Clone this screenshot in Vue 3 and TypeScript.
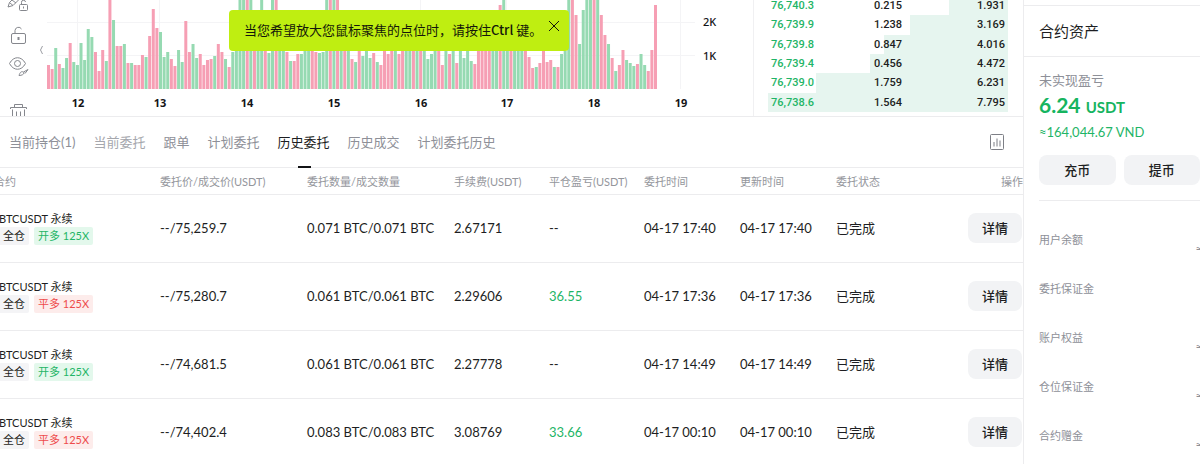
<script setup lang="ts">
import { ref } from 'vue'

interface Bar {
  x: number
  h: number
  up: boolean
}

interface Order {
  side: string
  kind: 'open' | 'close'
  price: string
  amount: string
  fee: string
  pnl: string
  time: string
}

// Hourly volume, height in pixels followed by r (down) or g (up)
const volume = `
24r 20r 41g 25r 21g 31g 46r 27g 24g 46g 29g 60g 52g 37r 18r 39r 28g 95r 69g 43r 43r 45g 26r 26g
24r 24r 34r 32g 53r 80r 61r 57g 32g 37g 30r 23r 39g 27g 68r 37r 45g 31g 35r 24r 29r 30r 33g 45r
37r 30g 22r 37g 46g 95g 95g 95r 95g 45r 50g 95g 52r 36g 95g 95r 55g 46g 37r 28g 28r 35r 35g 42g
50g 44r 37r 36g 37g 95g 95r 95g 95r 48g 46r 44g 30r 27g 42r 33g 42g 31g 36r 27g 24r 44r 35r 48r
46g 35r 50r 52g 60g 55r 48g 46r 42g 30g 35g 42g 46r 24r 44g 35r 42g 26r 46g 31g 40g 28g 25r 48r
50r 52r 44r 60g 64g 84r 95g 60g 55r 62g 50g 44g 40r 32r 21r 22g 26r 39r 27r 29r 22g 22r 35g 38g
95g 95r 74r 45g 79g 95g 95g 95r 95g 74r 54r 45g 31r 18g 24r 39r 29g 26g 23g 25r 35g 24g 18r 39r
84r`

const pitch = 607 / 168
const bars: Bar[] = volume
  .trim()
  .split(/\s+/)
  .map((v, i) => ({ x: 7 + i * pitch, h: parseInt(v, 10), up: v.endsWith('g') }))

const days = [
  { label: '12', x: 38 },
  { label: '13', x: 120 },
  { label: '14', x: 207 },
  { label: '15', x: 294 },
  { label: '16', x: 381 },
  { label: '17', x: 467 },
  { label: '18', x: 554 },
  { label: '19', x: 641 },
]

const bids = [
  { price: '76,740.3', amount: '0.215', total: '1.931' },
  { price: '76,739.9', amount: '1.238', total: '3.169' },
  { price: '76,739.8', amount: '0.847', total: '4.016' },
  { price: '76,739.4', amount: '0.456', total: '4.472' },
  { price: '76,739.0', amount: '1.759', total: '6.231' },
  { price: '76,738.6', amount: '1.564', total: '7.795' },
]
const depth = (total: string) => `${(Number(total) / 7.795) * 100}%`

const tabs = ['当前持仓(1)', '当前委托', '跟单', '计划委托', '历史委托', '历史成交', '计划委托历史']
const active = ref('历史委托')
const toastOpen = ref(true)

const orders: Order[] = [
  { side: '开多 125X', kind: 'open', price: '--/75,259.7', amount: '0.071 BTC/0.071 BTC', fee: '2.67171', pnl: '--', time: '04-17 17:40' },
  { side: '平多 125X', kind: 'close', price: '--/75,280.7', amount: '0.061 BTC/0.061 BTC', fee: '2.29606', pnl: '36.55', time: '04-17 17:36' },
  { side: '开多 125X', kind: 'open', price: '--/74,681.5', amount: '0.061 BTC/0.061 BTC', fee: '2.27778', pnl: '--', time: '04-17 14:49' },
  { side: '平多 125X', kind: 'close', price: '--/74,402.4', amount: '0.083 BTC/0.083 BTC', fee: '3.08769', pnl: '33.66', time: '04-17 00:10' },
]

const balances = [
  { label: '用户余额', approx: true },
  { label: '委托保证金', approx: false },
  { label: '账户权益', approx: true },
  { label: '仓位保证金', approx: true },
  { label: '合约赠金', approx: true },
]
</script>

<template>
  <div class="page">
    <main class="main">
      <div class="top">
        <section class="chart">
          <div class="tools">
            <button class="tool" type="button" aria-label="画图锁定">
              <svg width="22" height="22" viewBox="0 0 22 22">
                <path d="M1 13 2.500 8.500 10 1l3.500 3L6 11.500z M2.500 8.500l3.500 3M5 6l4 3" />
                <rect x="12.500" y="10.500" width="8" height="6" rx="1" />
                <path d="M14.500 10V8.500a2 2 0 0 1 4-.5M16.500 12.500v2" />
              </svg>
            </button>
            <button class="tool" type="button" aria-label="锁定">
              <svg width="22" height="22" viewBox="0 0 22 22">
                <rect x="4.500" y="9.500" width="14" height="10" rx="1.500" />
                <path d="M8 9V6.500a3.500 3.500 0 0 1 6.500-1.500" />
                <path class="thick" d="M11.500 13v3" />
              </svg>
            </button>
            <button class="tool" type="button" aria-label="显示">
              <svg width="22" height="22" viewBox="0 0 22 22">
                <path d="M2.500 9.500C6.500 1.800 14.500 1.800 18.500 9.500 14.500 17.200 6.500 17.200 2.500 9.500z" />
                <circle cx="10.500" cy="9.500" r="3" />
                <path d="M12 21.500c1-3 2-4.500 4.500-3.500 1.500 1.500-1 3.500-4.500 3.500zM16.500 18l4.500-2.500-3 4" />
              </svg>
            </button>
            <button class="tool" type="button" aria-label="删除">
              <svg width="22" height="22" viewBox="0 0 22 22">
                <path d="M3.500 8V6.500h16V8M7.500 6.500V3.500h8v3M5.500 8.500V20h12V8.500M9.500 10.500v7M13.500 10.500v7" />
              </svg>
            </button>
          </div>
          <svg class="plot" height="116" aria-label="成交量">
            <path class="chevron" d="M2.500 46 0.500 50l2 4" />
            <path class="grid" d="M7 22.500H655M7 55.500H655" />
            <path v-for="d in days" :key="d.label" class="grid" :d="`M${d.x - 0.5} 0V89`" />
            <rect
              v-for="(b, i) in bars"
              :key="i"
              :class="b.up ? 'up' : 'down'"
              :x="b.x"
              :y="89 - b.h"
              width="3"
              :height="b.h"
            />
            <text v-for="d in days" :key="d.label" class="day" :x="d.x" y="107">{{ d.label }}</text>
            <text class="level" x="663" y="26">2K</text>
            <text class="level" x="663" y="60">1K</text>
          </svg>
          <div v-if="toastOpen" class="toast" role="status">
            <span>当您希望放大您鼠标聚焦的点位时，请按住<b>Ctrl</b> 键。</span>
            <button type="button" aria-label="关闭" @click="toastOpen = false">
              <svg width="12" height="12" viewBox="0 0 12 12"><path d="M1 1l10 10M11 1 1 11" /></svg>
            </button>
          </div>
        </section>
        <section class="book">
          <div class="bids">
            <div v-for="b in bids" :key="b.price" class="bid">
              <i class="depth" :style="{ width: depth(b.total) }"></i>
              <span class="price">{{ b.price }}</span>
              <span>{{ b.amount }}</span>
              <span>{{ b.total }}</span>
            </div>
          </div>
        </section>
      </div>

      <nav class="tabs">
        <button
          v-for="t in tabs"
          :key="t"
          type="button"
          class="tab"
          :class="{ active: t === active, faint: t === '当前委托' }"
          @click="active = t"
        >{{ t }}</button>
        <button type="button" class="stats" aria-label="统计">
          <svg width="16" height="18" viewBox="0 0 16 18">
            <rect x="1.500" y="1.500" width="13" height="15" rx="1" />
            <path d="M5 13.500V9M8 13.500V5.500M11 13.500V7.500" />
          </svg>
        </button>
      </nav>

      <div class="scroll">
        <table class="orders">
          <colgroup>
            <col class="c-name" /><col class="c-wide" /><col class="c-wide" />
            <col class="c-slim" /><col class="c-slim" /><col class="c-time" /><col class="c-time" />
            <col />
          </colgroup>
          <thead>
            <tr>
              <th>合约</th>
              <th>委托价/成交价(USDT)</th>
              <th>委托数量/成交数量</th>
              <th>手续费(USDT)</th>
              <th>平仓盈亏(USDT)</th>
              <th>委托时间</th>
              <th>更新时间</th>
              <th><div class="last"><span>委托状态</span><span>操作</span></div></th>
            </tr>
          </thead>
          <tbody>
            <tr v-for="o in orders" :key="o.price">
              <td class="name">
                <div>BTCUSDT 永续</div>
                <div class="tags"><span class="tag">全仓</span><span class="tag" :class="o.kind">{{ o.side }}</span></div>
              </td>
              <td>{{ o.price }}</td>
              <td>{{ o.amount }}</td>
              <td>{{ o.fee }}</td>
              <td :class="{ gain: o.pnl !== '--' }">{{ o.pnl }}</td>
              <td>{{ o.time }}</td>
              <td>{{ o.time }}</td>
              <td><div class="last"><span>已完成</span><button type="button" class="detail">详情</button></div></td>
            </tr>
          </tbody>
        </table>
      </div>
    </main>

    <aside class="side">
      <h2>合约资产</h2>
      <div class="assets">
        <div class="caption">未实现盈亏</div>
        <div class="pnl">6.24 <small>USDT</small></div>
        <div class="fiat">≈164,044.67 VND</div>
        <div class="actions">
          <button type="button">充币</button>
          <button type="button">提币</button>
        </div>
        <dl class="balances">
          <div v-for="b in balances" :key="b.label">
            <dt>{{ b.label }}</dt>
            <dd v-if="b.approx">≈</dd>
          </div>
        </dl>
      </div>
    </aside>
  </div>
</template>

<style>
body {
  margin: 0;
  background: #fff;
}
</style>

<style scoped>
.page {
  display: flex;
  height: 100vh;
  overflow: hidden;
  background: #fff;
  color: #1d1e22;
  font: 13px/20px Lato, 'Noto Sans CJK SC', sans-serif;
}
button {
  padding: 0;
  border: 0;
  background: none;
  color: inherit;
  font: inherit;
  cursor: pointer;
}
svg {
  display: block;
  fill: none;
}
.main {
  flex: 1;
  min-width: 0;
}
.top {
  display: flex;
  height: 116px;
  border-bottom: 1px solid #ececee;
  overflow: hidden;
}
.chart {
  position: relative;
  display: flex;
  flex: 1;
  min-width: 0;
}
.tools {
  display: flex;
  flex-direction: column;
  gap: 8px;
  align-items: center;
  width: 36px;
  height: 129px;
  margin: -6px 4px 0 0;
}
.tool:last-child {
  margin-top: auto;
}
.tool svg {
  stroke: #85878d;
}
.tool .thick {
  stroke-width: 2;
}
.plot {
  flex: 1;
  min-width: 0;
}
.chevron {
  stroke: #9a9ca2;
}
.grid {
  stroke: #f4f4f6;
}
.up {
  fill: #96dab2;
}
.down {
  fill: #f69fb4;
}
.day,
.level {
  fill: #131416;
  font-family: 'Noto Sans', sans-serif;
  font-size: 11px;
  font-weight: 500;
}
.day {
  font-weight: 700;
  text-anchor: middle;
}
.toast {
  position: absolute;
  top: 10px;
  left: 229px;
  display: flex;
  align-items: flex-start;
  justify-content: space-between;
  box-sizing: border-box;
  width: 340px;
  height: 41px;
  padding: 10px 9px 10px 15px;
  border-radius: 4px;
  background: #bfee11;
  color: #14180a;
  font-family: 'Noto Sans CJK SC', sans-serif;
  white-space: nowrap;
}
.toast b {
  font-weight: 500;
}
.toast svg {
  stroke: #14180a;
}
.book {
  display: flex;
  align-items: flex-end;
  box-sizing: border-box;
  width: 270px;
  padding: 0 15px 4px 14px;
  border-left: 1px solid #f0f0f2;
}
.bids {
  display: grid;
  grid-template-rows: repeat(6, 1fr);
  flex: 1;
  height: 116px;
}
.bid {
  position: relative;
  display: grid;
  grid-template-columns: 50px 81px 1fr;
  align-items: center;
  padding: 1px 3px 0;
  font-family: Roboto, sans-serif;
  font-size: 11px;
  font-weight: 500;
  line-height: 18px;
  text-align: right;
}
.bid span {
  position: relative;
}
.depth {
  position: absolute;
  inset: 0 0 0 auto;
  background: #e6f5ef;
}
.price {
  color: #1fb567;
  text-align: left;
}
.tabs {
  display: flex;
  gap: 18px;
  height: 50px;
  padding: 0 18px 0 9px;
  border-bottom: 1px solid #ececee;
  color: #8e9098;
}
.tab {
  position: relative;
  white-space: nowrap;
}
.faint {
  color: #a5a7ad;
}
.active {
  color: #1d1e22;
}
.active::after {
  position: absolute;
  bottom: -1px;
  left: 50%;
  width: 13px;
  height: 2px;
  margin-left: -6px;
  background: #131416;
  content: '';
}
.stats {
  margin-left: auto;
}
.stats svg {
  stroke: #7d7f86;
}
.scroll {
  overflow: hidden;
}
.orders {
  width: calc(100% + 6px);
  margin-left: -6px;
  border-collapse: collapse;
  table-layout: fixed;
}
.c-name {
  width: 166px;
}
.c-wide {
  width: 147px;
}
.c-slim {
  width: 95px;
}
.c-time {
  width: 96px;
}
th,
td {
  padding: 0;
  border-bottom: 1px solid #ececee;
  text-align: left;
  white-space: nowrap;
}
th {
  height: 24px;
  padding-top: 2px;
  color: #94969c;
  font-size: 11px;
  font-weight: 400;
}
td {
  height: 65px;
  padding-bottom: 2px;
}
.last {
  display: flex;
  align-items: center;
  justify-content: space-between;
}
.name {
  padding-left: 5px;
  font-size: 11px;
  line-height: 16px;
}
.tags {
  display: flex;
  gap: 5px;
}
.tag {
  padding: 0 4px;
  border-radius: 2px;
  background: #f4f4f6;
  line-height: 18px;
}
.open {
  background: #e3f8ec;
  color: #1fb567;
}
.close {
  background: #fdeceb;
  color: #ee4b4b;
}
.gain {
  color: #1fb567;
}
.detail {
  width: 54px;
  height: 30px;
  margin-right: 1px;
  border-radius: 8px;
  background: #f2f3f5;
  font-weight: 500;
}
.side {
  box-sizing: border-box;
  width: 177px;
  padding-top: 5px;
  border-left: 1px solid #ececee;
  overflow: hidden;
}
h2 {
  margin: 0;
  padding: 0 15px;
  border: solid #ececee;
  border-width: 1px 0;
  font-size: 15px;
  font-weight: 400;
  line-height: 50px;
}
.assets {
  padding: 13px 0 0 15px;
}
.caption {
  color: #8e9098;
}
.pnl {
  color: #16b45f;
  font-size: 21px;
  font-weight: 700;
  line-height: 30px;
}
.pnl small {
  font-size: 15px;
}
.fiat {
  color: #1fb567;
}
.actions {
  display: flex;
  gap: 8px;
  margin: 13px 0 0;
  border-bottom: 1px solid #ececee;
  padding-bottom: 15px;
}
.actions button {
  flex: 1;
  height: 30px;
  border-radius: 8px;
  background: #f2f3f5;
  font-weight: 500;
}
.balances {
  margin: 29px 0 0;
  color: #8e9098;
  font-size: 11px;
}
.balances div {
  display: flex;
  justify-content: space-between;
  height: 49px;
  margin-right: -2px;
}
dd {
  margin: 9px 0 0;
}
</style>
